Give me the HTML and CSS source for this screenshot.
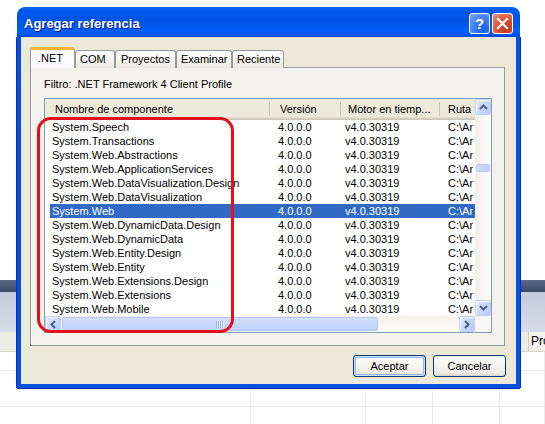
FILE: index.html
```html
<!DOCTYPE html>
<html>
<head>
<meta charset="utf-8">
<link rel="stylesheet" href="styles.css">
</head>
<body>
<div class="desk">
  <div class="app-blank"></div>
  <div class="app-dark"></div>
  <div class="app-band"></div>
  <div class="app-tabrow"><span class="app-tab">Pro</span></div>
  <div class="app-grid">
    <div class="g-row r1"><i></i><i></i><i></i><i></i><i></i></div>
    <div class="g-row r2"><i></i><i></i><i></i><i></i><i></i></div>
    <div class="g-row r3"><i></i><i></i><i></i><i></i><i></i></div>
  </div>
</div>

<div class="dialog">
  <div class="titlebar">
    <span class="title">Agregar referencia</span>
    <div class="tb-btns">
      <span class="tb-btn help">?</span>
      <span class="tb-btn close"><svg width="13" height="13" viewBox="0 0 13 13"><path d="M2 2 L11 11 M11 2 L2 11" stroke="#fff" stroke-width="2.2" stroke-linecap="square"/></svg></span>
    </div>
  </div>
  <div class="frame">
    <div class="tabs">
      <span class="tab sel t-net">.NET</span>
      <span class="tab t-com">COM</span>
      <span class="tab t-proy">Proyectos</span>
      <span class="tab t-exam">Examinar</span>
      <span class="tab t-rec">Reciente</span>
    </div>
    <div class="panel">
      <div class="filter">Filtro: .NET Framework 4 Client Profile</div>
      <div class="list">
        <div class="lv">
          <div class="lv-head">
            <span class="hc h1">Nombre de componente</span>
            <span class="hc h2">Versión</span>
            <span class="hc h3">Motor en tiemp...</span>
            <span class="hc h4">Ruta</span>
          </div>
          <div class="row"><span>System.Speech</span><span>4.0.0.0</span><span>v4.0.30319</span><span>C:\Ar</span></div>
          <div class="row"><span>System.Transactions</span><span>4.0.0.0</span><span>v4.0.30319</span><span>C:\Ar</span></div>
          <div class="row"><span>System.Web.Abstractions</span><span>4.0.0.0</span><span>v4.0.30319</span><span>C:\Ar</span></div>
          <div class="row"><span>System.Web.ApplicationServices</span><span>4.0.0.0</span><span>v4.0.30319</span><span>C:\Ar</span></div>
          <div class="row"><span>System.Web.DataVisualization.Design</span><span>4.0.0.0</span><span>v4.0.30319</span><span>C:\Ar</span></div>
          <div class="row"><span>System.Web.DataVisualization</span><span>4.0.0.0</span><span>v4.0.30319</span><span>C:\Ar</span></div>
          <div class="row sel"><span>System.Web</span><span>4.0.0.0</span><span>v4.0.30319</span><span>C:\Ar</span></div>
          <div class="row"><span>System.Web.DynamicData.Design</span><span>4.0.0.0</span><span>v4.0.30319</span><span>C:\Ar</span></div>
          <div class="row"><span>System.Web.DynamicData</span><span>4.0.0.0</span><span>v4.0.30319</span><span>C:\Ar</span></div>
          <div class="row"><span>System.Web.Entity.Design</span><span>4.0.0.0</span><span>v4.0.30319</span><span>C:\Ar</span></div>
          <div class="row"><span>System.Web.Entity</span><span>4.0.0.0</span><span>v4.0.30319</span><span>C:\Ar</span></div>
          <div class="row"><span>System.Web.Extensions.Design</span><span>4.0.0.0</span><span>v4.0.30319</span><span>C:\Ar</span></div>
          <div class="row"><span>System.Web.Extensions</span><span>4.0.0.0</span><span>v4.0.30319</span><span>C:\Ar</span></div>
          <div class="row"><span>System.Web.Mobile</span><span>4.0.0.0</span><span>v4.0.30319</span><span>C:\Ar</span></div>
        </div>
        <div class="vs">
          <span class="sa"><svg width="9" height="6" viewBox="0 0 9 6"><path d="M1 5 L4.5 1.5 L8 5" fill="none" stroke="#4d6185" stroke-width="2"/></svg></span>
          <span class="vtrack"><span class="vthumb"></span></span>
          <span class="sa"><svg width="9" height="6" viewBox="0 0 9 6"><path d="M1 1 L4.5 4.5 L8 1" fill="none" stroke="#4d6185" stroke-width="2"/></svg></span>
        </div>
        <div class="hs">
          <span class="sa"><svg width="6" height="9" viewBox="0 0 6 9"><path d="M5 1 L1.5 4.5 L5 8" fill="none" stroke="#4d6185" stroke-width="2"/></svg></span>
          <span class="hthumb"><span class="grip"></span></span>
          <span class="htrack"></span>
          <span class="sa"><svg width="6" height="9" viewBox="0 0 6 9"><path d="M1 1 L4.5 4.5 L1 8" fill="none" stroke="#4d6185" stroke-width="2"/></svg></span>
        </div>
        <div class="corner"></div>
      </div>
    </div>
    <div class="btns">
      <button class="btn def">Aceptar</button>
      <button class="btn">Cancelar</button>
    </div>
  </div>
</div>

<div class="mark"></div>
</body>
</html>
```

FILE: styles.css
```css
* { box-sizing: border-box; }
body {
  margin: 0;
  width: 545px;
  height: 424px;
  overflow: hidden;
  position: relative;
  background: #fff;
  font-family: "Liberation Sans", Arial, sans-serif;
  font-size: 11px;
  color: #000;
}

/* background application */
.desk { display: flex; flex-direction: column; height: 424px; }
.app-blank { height: 280px; }
.app-dark { height: 12px; background: linear-gradient(#5a6a88, #3c4a68); }
.app-band { height: 40px; background: linear-gradient(#c3cbdd, #d6dce8); }
.app-tabrow {
  height: 20px;
  background: #ecebe4;
  border-bottom: 1px solid #d9d6ca;
  display: flex;
  justify-content: flex-end;
}
.app-tab {
  width: 17px;
  padding-left: 2px;
  line-height: 19px;
  font-size: 12px;
  background: #f4f3ee;
  border-left: 1px solid #cfccc0;
  white-space: nowrap;
  overflow: hidden;
}
.app-grid { display: flex; flex-direction: column; }
.g-row { display: grid; grid-template-columns: 251px 115px 67px 67px 45px; border-bottom: 1px solid #e8e8e8; }
.g-row i { border-right: 1px solid #ebebeb; }
.r1 { height: 19px; }
.r2 { height: 36px; }
.r3 { height: 17px; border-bottom: 0; }

/* dialog */
.dialog {
  position: absolute;
  left: 17px;
  top: 7px;
  width: 503px;
  height: 381px;
  display: flex;
  flex-direction: column;
}
.titlebar {
  height: 30px;
  border-radius: 8px 8px 0 0;
  background: linear-gradient(#0a66f0 0%, #0058ee 12%, #0054e3 45%, #005ef8 80%, #0058f0 92%, #0043d6 100%);
  display: flex;
  align-items: center;
  padding: 2px 7px 0 7px;
}
.title {
  flex: 1;
  color: #fff;
  font-weight: bold;
  font-size: 13px;
  text-shadow: 1px 1px 0 #0a1a8a;
}
.tb-btns { display: flex; gap: 2px; }
.tb-btn {
  width: 21px;
  height: 21px;
  border: 1px solid #fff;
  border-radius: 3px;
  display: flex;
  align-items: center;
  justify-content: center;
}
.help {
  background: radial-gradient(circle at 75% 80%, #1f5fe8 0%, #3a7af4 45%, #7fa9f8 100%);
  color: #fff;
  font-weight: bold;
  font-size: 15px;
}
.close {
  background: radial-gradient(circle at 75% 80%, #c4391a 0%, #dc5030 45%, #ec9479 100%);
}

.frame {
  flex: 1;
  background: #ece9d8;
  border: 4px solid #0552e0;
  border-top: 0;
  box-shadow: -1px 0 0 #0832b0, 1px 0 0 #0832b0, 0 1px 0 #0832b0;
  display: flex;
  flex-direction: column;
  padding: 10px 0 0 9px;
}

.tabs {
  display: flex;
  align-items: flex-end;
  height: 21px;
  position: relative;
  z-index: 1;
}
.tab {
  height: 18px;
  border: 1px solid #919b9c;
  border-bottom: 0;
  border-radius: 3px 3px 0 0;
  background: linear-gradient(#fefefe, #f4f3ee 60%, #eae8e0);
  line-height: 17px;
  white-space: nowrap;
}
.tab.sel {
  height: 21px;
  background: #fcfcfe;
  border-top: 3px solid #f8b33a;
  line-height: 16px;
}
.t-net { width: 45px; padding-left: 7px; }
.t-com { width: 40px; padding-left: 4px; }
.t-proy { width: 61px; padding-left: 5px; }
.t-exam { width: 56px; padding-left: 4px; }
.t-rec { width: 52px; padding-left: 4px; }

.panel {
  width: 475px;
  height: 279px;
  margin-top: -1px;
  border: 1px solid #919b9c;
  background: #f3f2ec;
  padding: 10px 0 0 13px;
  display: flex;
  flex-direction: column;
}
.filter { line-height: 13px; height: 13px; margin-bottom: 7px; }

.list {
  width: 448px;
  height: 235px;
  border: 1px solid #7f9db9;
  background: #fff;
  display: grid;
  grid-template-columns: 430px 16px;
  grid-template-rows: 217px 16px;
}
.lv { overflow: hidden; }
.lv-head {
  display: grid;
  grid-template-columns: 225px 71px 99px 35px;
  height: 21px;
  background: linear-gradient(#ebeadb 0, #ebeadb 18px, #e2decd 18px, #e2decd 19px, #d6d2c2 19px, #d6d2c2 20px, #cbc7b8 20px);
}
.hc {
  position: relative;
  line-height: 19px;
  padding-top: 1px;
  white-space: nowrap;
  overflow: hidden;
}
.hc::after {
  content: "";
  position: absolute;
  right: 0;
  top: 3px;
  height: 14px;
  width: 1px;
  background: #c7c5b2;
  box-shadow: 1px 0 0 #fff;
}
.h4::after { display: none; }
.h1 { padding-left: 10px; }
.h2 { padding-left: 10px; }
.h3 { padding-left: 7px; }
.h4 { padding-left: 8px; }

.row {
  display: grid;
  grid-template-columns: 220px 71px 99px 33px;
  height: 14px;
  line-height: 14px;
  margin-left: 5px;
  white-space: nowrap;
}
.row span { overflow: hidden; }
.row span:nth-child(1) { padding-left: 2px; }
.row span:nth-child(2) { padding-left: 8px; }
.row span:nth-child(3) { padding-left: 4px; }
.row span:nth-child(4) { padding-left: 8px; }
.row.sel { background: #316ac5; color: #fff; }

/* scrollbars */
.sa {
  flex: none;
  width: 16px;
  height: 16px;
  border: 1px solid #bccdf6;
  border-radius: 2px;
  background: linear-gradient(135deg, #e0e9fe 0%, #c8d7fc 50%, #b6c9f8 100%);
  box-shadow: inset 1px 1px 0 #fff;
  display: flex;
  align-items: center;
  justify-content: center;
}
.vs {
  display: flex;
  flex-direction: column;
  background: linear-gradient(90deg, #f3f1ea, #fdfdfb);
}
.vtrack { flex: 1; display: flex; flex-direction: column; }
.vthumb {
  margin: 49px 1px 0 1px;
  height: 8px;
  border: 1px solid #b3c7f5;
  border-radius: 2px;
  background: linear-gradient(90deg, #d3e0fd, #bfd1fb);
}
.hs {
  display: flex;
  background: linear-gradient(#f3f1ea, #fdfdfb);
}
.hthumb {
  margin: 1px 0 1px 1px;
  width: 316px;
  border: 1px solid #b3c7f5;
  border-radius: 2px;
  background: linear-gradient(#d3e0fd, #bfd1fb);
  display: flex;
  align-items: center;
  justify-content: center;
}
.grip {
  width: 8px;
  height: 7px;
  background: repeating-linear-gradient(90deg, #8cacee 0, #8cacee 1px, #eef3fe 1px, #eef3fe 2px);
}
.htrack { flex: 1; }
.corner { background: #f8f7f3; }

/* buttons */
.btns {
  display: flex;
  justify-content: flex-end;
  gap: 7px;
  margin-top: 9px;
  padding-right: 10px;
}
.btn {
  width: 73px;
  height: 22px;
  border: 1px solid #003c74;
  border-radius: 3px;
  background: linear-gradient(#ffffff, #f6f5f0 40%, #ecebe5 85%, #d8d2c6);
  font-family: "Liberation Sans", Arial, sans-serif;
  font-size: 11px;
  color: #000;
  padding: 0;
}
.btn.def { box-shadow: inset 0 0 0 1px #cee3fc, inset 0 0 0 2px #95b4ec; }

/* red annotation */
.mark {
  position: absolute;
  left: 37px;
  top: 117px;
  width: 197px;
  height: 216px;
  border: 3px solid #e4101c;
  border-radius: 14px;
}
```
